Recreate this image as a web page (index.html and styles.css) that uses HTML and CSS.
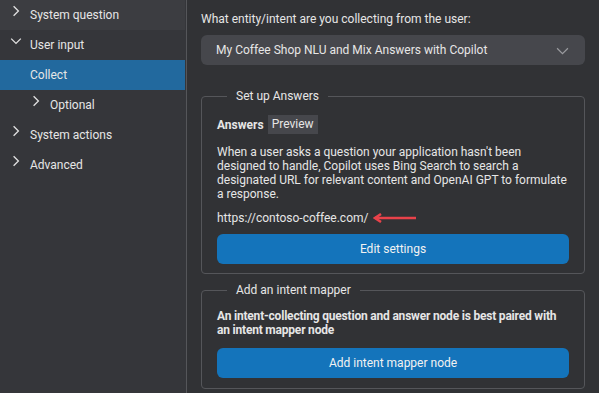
FILE: index.html
```html
<!DOCTYPE html>
<html lang="en">
<head>
  <meta charset="UTF-8">
  <meta name="viewport" content="width=device-width, initial-scale=1">
  <title>Collect node</title>
  <link rel="stylesheet" href="styles.css">
</head>
<body>

  <div class="layout">
    <nav class="sidebar">
      <div class="nav-item hover">
        <svg class="chev" viewBox="0 0 10 10"><path d="M3 1 L7 5 L3 9"/></svg>
        <span>System question</span>
      </div>
      <div class="nav-item">
        <svg class="chev" viewBox="0 0 10 10"><path d="M1 3 L5 7 L9 3"/></svg>
        <span>User input</span>
      </div>
      <div class="nav-item selected">
        <span class="chev-space"></span>
        <span>Collect</span>
      </div>
      <div class="nav-item sub">
        <svg class="chev" viewBox="0 0 10 10"><path d="M3 1 L7 5 L3 9"/></svg>
        <span>Optional</span>
      </div>
      <div class="nav-item">
        <svg class="chev" viewBox="0 0 10 10"><path d="M3 1 L7 5 L3 9"/></svg>
        <span>System actions</span>
      </div>
      <div class="nav-item">
        <svg class="chev" viewBox="0 0 10 10"><path d="M3 1 L7 5 L3 9"/></svg>
        <span>Advanced</span>
      </div>
    </nav>

    <main class="panel">
      <label class="field-label">What entity/intent are you collecting from the user:</label>
      <div class="select">
        <span>My Coffee Shop NLU and Mix Answers with Copilot</span>
        <svg class="select-chev" viewBox="0 0 12 8"><path d="M1 1 L6 6 L11 1"/></svg>
      </div>

      <fieldset class="group">
        <legend>Set up Answers</legend>
        <div class="title-row">
          <strong>Answers</strong>
          <span class="tag">Preview</span>
        </div>
        <p class="desc">When a user asks a question your application hasn't been designed to handle, Copilot uses Bing Search to search a designated URL for relevant content and OpenAI GPT to formulate a response.</p>
        <div class="url-row">
          <span>https://contoso-coffee.com/</span>
          <svg class="arrow" viewBox="0 0 44 10"><path d="M2 5 L43 5" stroke-width="2.5"/><path d="M8 1 L2 5 L8 9" stroke-width="2.5" fill="none"/></svg>
        </div>
        <button class="btn">Edit settings</button>
      </fieldset>

      <fieldset class="group second">
        <legend>Add an intent mapper</legend>
        <p class="desc bold">An intent-collecting question and answer node is best paired with an intent mapper node</p>
        <button class="btn">Add intent mapper node</button>
      </fieldset>
    </main>
  </div>

</body>
</html>
```

FILE: styles.css
```css
* {
  box-sizing: border-box;
}

body {
  margin: 0;
  padding: 0;
  font-family: Roboto, "Liberation Sans", sans-serif;
  font-size: 12px;
  color: #e6e6e6;
  background-color: #313235;
  overflow: hidden;
}

.layout {
  display: flex;
  height: 393px;
}

.sidebar {
  width: 187px;
  flex-shrink: 0;
  background-color: #35363a;
  border-right: 1px solid #55565a;
  padding-right: 1px;
}

.nav-item {
  display: flex;
  align-items: center;
  height: 30px;
  padding-left: 10px;
}

.nav-item.hover {
  background-color: #3c3d41;
}

.nav-item.selected {
  background-color: #22699e;
}

.nav-item.sub {
  padding-left: 30px;
}

.chev {
  width: 12px;
  height: 12px;
  margin-right: 8px;
  margin-top: -8px;
  fill: none;
  stroke: #e0e0e0;
  stroke-width: 1.1;
}

.chev-space {
  width: 20px;
}

.panel {
  flex: 1;
  padding: 11px 14px 0 14px;
}

.field-label {
  display: block;
  line-height: 16px;
}

.select {
  display: flex;
  align-items: center;
  justify-content: space-between;
  height: 30px;
  margin-top: 8px;
  padding: 0 16px 0 15px;
  border-radius: 6px;
  background-color: #46474c;
}

.select-chev {
  width: 13px;
  height: 9px;
  margin-top: 2px;
  fill: none;
  stroke: #9a9b9f;
  stroke-width: 1.1;
}

.group {
  margin: 23px 0 0 0;
  padding: 11px 15px 9px 15px;
  border: 1px solid #55565a;
  border-radius: 4px;
}

.group.second {
  margin-top: 8px;
  padding-top: 10px;
  padding-bottom: 10px;
}

.group legend {
  margin-left: 10px;
  padding: 0 9px 0 9px;
  font-size: 12px;
  line-height: 16px;
}

.title-row {
  display: flex;
  align-items: center;
  gap: 4px;
}

.title-row strong {
  font-weight: 700;
}

.tag {
  padding: 2px 4px;
  background-color: #46474c;
  line-height: 15px;
}

.desc {
  margin: 11px 0 0 0;
  line-height: 14px;
}

.desc.bold {
  margin-top: 1px;
  font-weight: 700;
  letter-spacing: -0.2px;
}

.url-row {
  display: flex;
  align-items: center;
  margin-top: 9px;
  line-height: 16px;
}

.arrow {
  width: 44px;
  height: 10px;
  margin-left: 5px;
  stroke: #e8424a;
  fill: none;
}

.btn {
  display: block;
  width: 100%;
  height: 30px;
  margin-top: 8px;
  border: none;
  border-radius: 6px;
  background-color: #1474bb;
  color: #f2f2f2;
  font-family: Roboto, "Liberation Sans", sans-serif;
  font-size: 12px;
  cursor: pointer;
}

.second .btn {
  margin-top: 11px;
}
```
